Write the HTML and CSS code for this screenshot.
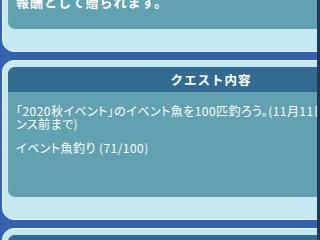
FILE: index.html
```html
<!DOCTYPE html>
<html lang="ja">
<head>
<meta charset="utf-8">
<link rel="stylesheet" href="styles.css">
</head>
<body>
<div class="page">
  <section class="panel">
    <div class="inner">
      <div class="body first">
        <p class="lead">報酬として贈られます。</p>
      </div>
    </div>
  </section>
  <section class="panel">
    <div class="inner">
      <h2 class="head">クエスト内容</h2>
      <div class="body quest">
        <p>「2020秋イベント」のイベント魚を100匹釣ろう。(11月11日メンテナ<br>ンス前まで)</p>
        <p class="progress">イベント魚釣り (71/100)</p>
      </div>
    </div>
  </section>
  <section class="panel">
    <div class="inner">
      <div class="head"></div>
      <div class="body"></div>
    </div>
  </section>
</div>
</body>
</html>
```

FILE: styles.css
```css
html, body {
  margin: 0;
  padding: 0;
}
body {
  width: 317px;
  height: 240px;
  overflow: hidden;
  background: #3462ac;
  border-right: 3px solid #1d3b55;
  font-family: "Noto Sans CJK JP", "Noto Sans", sans-serif;
  color: #ffffff;
}
.page {
  width: 418px;
  padding-left: 2px;
  margin-top: -40px;
}
.panel {
  background: #c6e9f1;
  border: 1px solid #e4f5f9;
  border-radius: 12px;
  padding: 6px 5px 22px;
  margin-bottom: 8px;
}
.inner {
  border-radius: 7px;
  overflow: hidden;
  background: #62a1b0;
}
.head {
  margin: 0;
  height: 25px;
  background: #336b90;
  font-size: 12.5px;
  font-weight: bold;
  letter-spacing: 1px;
  line-height: 25px;
  text-align: center;
}
.body {
  padding: 12px 8px 43px;
  font-size: 12px;
  line-height: 13px;
  font-feature-settings: "palt";
  letter-spacing: 0.45px;
}
.body p {
  margin: 0;
}
.first {
  padding: 27px 8px 19px;
  font-feature-settings: normal;
  letter-spacing: 0;
}
.lead {
  font-size: 13px;
  font-weight: bold;
  letter-spacing: 1px;
  line-height: 16px;
}
.progress {
  margin-top: 11px !important;
}
```
